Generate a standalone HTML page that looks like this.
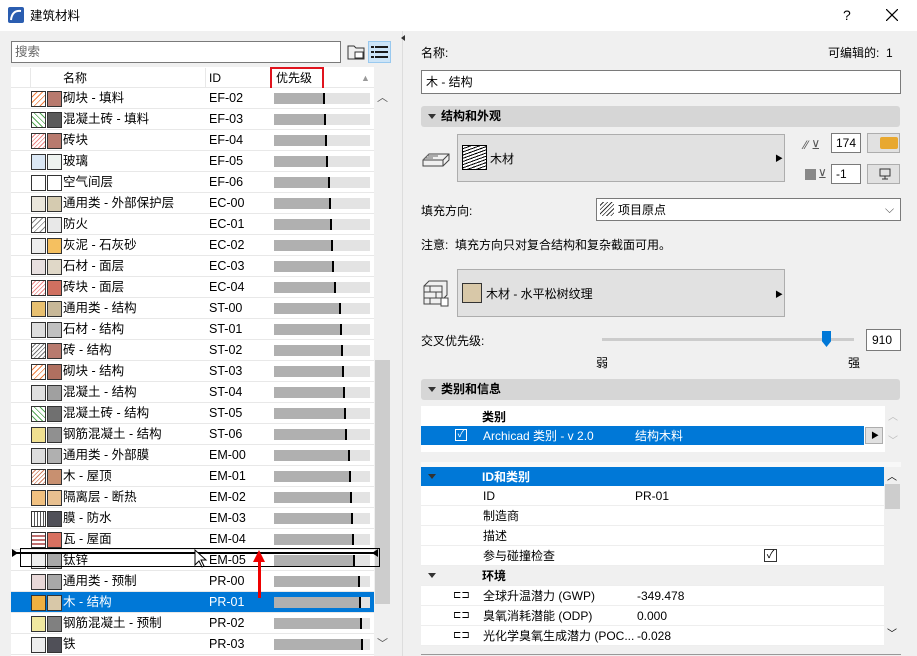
<!DOCTYPE html>
<html><head><meta charset="utf-8"><style>
*{box-sizing:border-box;margin:0;padding:0}
body{width:917px;height:656px;overflow:hidden;background:#f0f0f0;font-family:"Liberation Sans","Noto Sans CJK SC",sans-serif;font-size:12px;line-height:16px;color:#000;position:relative}
.a{position:absolute}
.tb{left:0;top:0;width:917px;height:31px;background:#fff}
.list{left:11px;top:67px;width:363px;height:589px;background:#fff}
.r{position:absolute;left:11px;width:363px;height:21px;border-bottom:1px solid #e8e8e8;background:#fff}
.r .s1,.r .s2{position:absolute;top:3px;width:15px;height:16px;border:1px solid #333}
.r .s1{left:20px;background:#fff}
.r .s2{left:36px}
.r .n{position:absolute;left:52px;top:2px;font-size:12.5px}
.r .i{position:absolute;left:198px;top:2px;font-size:12.5px}
.r .b{position:absolute;left:263px;top:5px;width:96px;height:11px;background:#e3e3e3}
.r .b i{position:absolute;left:0;top:0;height:11px;background:#b0b0b0;border-right:2px solid #000}
.sel{background:#0078d7}
.sel .n,.sel .i{color:#fff}
.hdr{left:421px;width:479px;height:21px;background:#d6d6d6;border-radius:3px;font-weight:bold;padding:2px 0 0 20px}
.hdr:before{content:"";position:absolute;left:7px;top:8px;border:4px solid transparent;border-top:5px solid #333;border-bottom:0}
.btn{background:#e1e1e1;border:1px solid #adadad}
.inp{background:#fff;border:1px solid #7a7a7a}
.pr{position:absolute;left:421px;width:463px;height:20px;background:#fff;border-bottom:1px solid #eee}
.pr span{position:absolute;top:2px}
</style></head><body>
<div class="a tb">
<svg class="a" style="left:8px;top:7px" width="16" height="16"><rect x="0" y="0" width="16" height="16" rx="2" fill="#2a5db0"/><path d="M3 13 Q4 3 13 4" stroke="#fff" stroke-width="2" fill="none"/></svg>
<span class="a" style="left:30px;top:8px;font-size:12.5px">建筑材料</span>
<span class="a" style="left:843px;top:7px;font-size:14px">?</span>
<svg class="a" style="left:886px;top:9px" width="12" height="12"><path d="M0 0L12 12M12 0L0 12" stroke="#000" stroke-width="1.2"/></svg>
</div>
<div class="a inp" style="left:11px;top:41px;width:330px;height:22px;color:#666;padding:2px 3px;font-size:12.5px">搜索</div>
<svg class="a" style="left:347px;top:43px" width="18" height="18"><path d="M1 3h6l2 2h8v11H1z" fill="none" stroke="#333"/><rect x="8" y="9" width="8" height="6" fill="#fff" stroke="#333"/></svg>
<div class="a" style="left:368px;top:41px;width:23px;height:22px;background:#cce4f7;border:1px solid #99c9ef"></div>
<svg class="a" style="left:371px;top:45px" width="17" height="14"><g fill="#1a1a1a"><rect x="0" y="1" width="3" height="2"/><rect x="4" y="1" width="13" height="2"/><rect x="0" y="6" width="3" height="2"/><rect x="4" y="6" width="13" height="2"/><rect x="0" y="11" width="3" height="2"/><rect x="4" y="11" width="13" height="2"/></g></svg>
<div class="a list"></div>
<div class="a" style="left:11px;top:68px;width:363px;height:20px;background:#fff;border-bottom:1px solid #e8e8e8">
<div class="a" style="left:19px;top:0;width:1px;height:20px;background:#e8e8e8"></div>
<span class="a" style="left:52px;top:2px">名称</span>
<div class="a" style="left:194px;top:0;width:1px;height:20px;background:#e8e8e8"></div>
<span class="a" style="left:198px;top:2px">ID</span>
<div class="a" style="left:259px;top:-1px;width:54px;height:24px;border:2px solid #e0141e"></div>
<span class="a" style="left:265px;top:2px">优先级</span>
<span class="a" style="left:350px;top:2px;color:#999;font-size:9px">▲</span>
</div>
<div class="a" style="left:374px;top:88px;width:17px;height:568px;background:#f0f0f0"></div>
<div class="a" style="left:375px;top:360px;width:15px;height:244px;background:#cdcdcd"></div>
<span class="a" style="left:377px;top:90px;font-size:11px;color:#555">︿</span>
<span class="a" style="left:377px;top:636px;font-size:11px;color:#555">﹀</span>

<div class="r" style="top:88px"><div class="s1" style="background:repeating-linear-gradient(135deg,#fff 0 3px,#f08040 3px 4px)"></div><div class="s2" style="background:#b87a6e"></div><span class="n">砌块 - 填料</span><span class="i">EF-02</span><div class="b"><i style="width:51px"></i></div></div>
<div class="r" style="top:109px"><div class="s1" style="background:repeating-linear-gradient(45deg,#fff 0 3px,#5a5 3px 4px)"></div><div class="s2" style="background:#5a5a5a"></div><span class="n">混凝土砖 - 填料</span><span class="i">EF-03</span><div class="b"><i style="width:52px"></i></div></div>
<div class="r" style="top:130px"><div class="s1" style="background:repeating-linear-gradient(135deg,#fff 0 2px,#e88 2px 3px)"></div><div class="s2" style="background:#b87a6e"></div><span class="n">砖块</span><span class="i">EF-04</span><div class="b"><i style="width:53px"></i></div></div>
<div class="r" style="top:151px"><div class="s1" style="background:#dbe8f5"></div><div class="s2" style="background:#eef3f0"></div><span class="n">玻璃</span><span class="i">EF-05</span><div class="b"><i style="width:54px"></i></div></div>
<div class="r" style="top:172px"><div class="s1"></div><div class="s2" style="background:#fff"></div><span class="n">空气间层</span><span class="i">EF-06</span><div class="b"><i style="width:56px"></i></div></div>
<div class="r" style="top:193px"><div class="s1" style="background:#eae6dc"></div><div class="s2" style="background:#d5cbb0"></div><span class="n">通用类 - 外部保护层</span><span class="i">EC-00</span><div class="b"><i style="width:57px"></i></div></div>
<div class="r" style="top:214px"><div class="s1" style="background:repeating-linear-gradient(135deg,#fff 0 3px,#888 3px 4px)"></div><div class="s2" style="background:#e8e8e8"></div><span class="n">防火</span><span class="i">EC-01</span><div class="b"><i style="width:58px"></i></div></div>
<div class="r" style="top:235px"><div class="s1" style="background:#eee"></div><div class="s2" style="background:#f5c060"></div><span class="n">灰泥 - 石灰砂</span><span class="i">EC-02</span><div class="b"><i style="width:59px"></i></div></div>
<div class="r" style="top:256px"><div class="s1" style="background:#e8e0e0"></div><div class="s2" style="background:#e0d8c8"></div><span class="n">石材 - 面层</span><span class="i">EC-03</span><div class="b"><i style="width:60px"></i></div></div>
<div class="r" style="top:277px"><div class="s1" style="background:repeating-linear-gradient(135deg,#fff 0 2px,#e88 2px 3px)"></div><div class="s2" style="background:#d07060"></div><span class="n">砖块 - 面层</span><span class="i">EC-04</span><div class="b"><i style="width:62px"></i></div></div>
<div class="r" style="top:298px"><div class="s1" style="background:#e8c070"></div><div class="s2" style="background:#c8b898"></div><span class="n">通用类 - 结构</span><span class="i">ST-00</span><div class="b"><i style="width:67px"></i></div></div>
<div class="r" style="top:319px"><div class="s1" style="background:#ddd"></div><div class="s2" style="background:#c0c0c0"></div><span class="n">石材 - 结构</span><span class="i">ST-01</span><div class="b"><i style="width:68px"></i></div></div>
<div class="r" style="top:340px"><div class="s1" style="background:repeating-linear-gradient(135deg,#fff 0 2px,#777 2px 3px)"></div><div class="s2" style="background:#b87a6e"></div><span class="n">砖 - 结构</span><span class="i">ST-02</span><div class="b"><i style="width:69px"></i></div></div>
<div class="r" style="top:361px"><div class="s1" style="background:repeating-linear-gradient(135deg,#fff 0 3px,#f08040 3px 4px)"></div><div class="s2" style="background:#b07060"></div><span class="n">砌块 - 结构</span><span class="i">ST-03</span><div class="b"><i style="width:70px"></i></div></div>
<div class="r" style="top:382px"><div class="s1" style="background:#e0e0e0"></div><div class="s2" style="background:#a0a0a0"></div><span class="n">混凝土 - 结构</span><span class="i">ST-04</span><div class="b"><i style="width:71px"></i></div></div>
<div class="r" style="top:403px"><div class="s1" style="background:repeating-linear-gradient(45deg,#fff 0 3px,#5a5 3px 4px)"></div><div class="s2" style="background:#707070"></div><span class="n">混凝土砖 - 结构</span><span class="i">ST-05</span><div class="b"><i style="width:72px"></i></div></div>
<div class="r" style="top:424px"><div class="s1" style="background:#f0e090"></div><div class="s2" style="background:#909090"></div><span class="n">钢筋混凝土 - 结构</span><span class="i">ST-06</span><div class="b"><i style="width:73px"></i></div></div>
<div class="r" style="top:445px"><div class="s1" style="background:#ddd"></div><div class="s2" style="background:#b0b0b0"></div><span class="n">通用类 - 外部膜</span><span class="i">EM-00</span><div class="b"><i style="width:76px"></i></div></div>
<div class="r" style="top:466px"><div class="s1" style="background:repeating-linear-gradient(135deg,#fff 0 2px,#d08060 2px 3px)"></div><div class="s2" style="background:#c89070"></div><span class="n">木 - 屋顶</span><span class="i">EM-01</span><div class="b"><i style="width:77px"></i></div></div>
<div class="r" style="top:487px"><div class="s1" style="background:#f0c080"></div><div class="s2" style="background:#e8c090"></div><span class="n">隔离层 - 断热</span><span class="i">EM-02</span><div class="b"><i style="width:78px"></i></div></div>
<div class="r" style="top:508px"><div class="s1" style="background:repeating-linear-gradient(90deg,#fff 0 2px,#555 2px 3px)"></div><div class="s2" style="background:#505058"></div><span class="n">膜 - 防水</span><span class="i">EM-03</span><div class="b"><i style="width:79px"></i></div></div>
<div class="r" style="top:529px"><div class="s1" style="background:repeating-linear-gradient(0deg,#fff 0 2px,#c07070 2px 4px)"></div><div class="s2" style="background:#d87060"></div><span class="n">瓦 - 屋面</span><span class="i">EM-04</span><div class="b"><i style="width:80px"></i></div></div>
<div class="r" style="top:550px"><div class="s1" style="background:#eee"></div><div class="s2" style="background:#a8a8a8"></div><span class="n">钛锌</span><span class="i">EM-05</span><div class="b"><i style="width:81px"></i></div></div>
<div class="r" style="top:571px"><div class="s1" style="background:#e8d8d8"></div><div class="s2" style="background:#a8a8a8"></div><span class="n">通用类 - 预制</span><span class="i">PR-00</span><div class="b"><i style="width:86px"></i></div></div>
<div class="r sel" style="top:592px"><div class="s1" style="background:#f0b040"></div><div class="s2" style="background:#d8c8a8"></div><span class="n">木 - 结构</span><span class="i">PR-01</span><div class="b"><i style="width:87px"></i></div></div>
<div class="r" style="top:613px"><div class="s1" style="background:#f0e8a0"></div><div class="s2" style="background:#808080"></div><span class="n">钢筋混凝土 - 预制</span><span class="i">PR-02</span><div class="b"><i style="width:88px"></i></div></div>
<div class="r" style="top:634px"><div class="s1" style="background:#eee"></div><div class="s2" style="background:#505058"></div><span class="n">铁</span><span class="i">PR-03</span><div class="b"><i style="width:89px"></i></div></div>

<div class="a" style="left:20px;top:548px;width:360px;height:19px;border:1px solid #000"></div>
<div class="a" style="left:14px;top:552px;width:360px;height:2px;background:#000"></div>
<div class="a" style="left:12px;top:549px;border:4px solid transparent;border-left:6px solid #000"></div>
<div class="a" style="left:368px;top:549px;border:4px solid transparent;border-right:6px solid #000"></div>
<div class="a" style="left:258px;top:560px;width:3px;height:38px;background:#e00"></div>
<div class="a" style="left:253px;top:550px;border:6px solid transparent;border-bottom:12px solid #e00;border-top:0"></div>
<svg class="a" style="left:194px;top:549px" width="16" height="22"><path d="M1 1v15l4-4 3 6 2-1-3-6h5z" fill="#fff" stroke="#000"/></svg>

<div class="a" style="left:395px;top:31px;width:8px;height:625px;background:#f0f0f0;border-right:1px solid #ddd"></div>
<div class="a" style="left:401px;top:35px;border:3px solid transparent;border-right:4px solid #333;border-left:0"></div>

<span class="a" style="left:421px;top:45px">名称:</span>
<span class="a" style="left:828px;top:45px">可编辑的:&nbsp; 1</span>
<div class="a inp" style="left:421px;top:70px;width:480px;height:24px;padding:3px 4px">木 - 结构</div>
<div class="a hdr" style="top:106px">结构和外观</div>
<svg class="a" style="left:421px;top:145px" width="30" height="28"><path d="M2 15l6-6h20v6l-6 6H2z M2 15h20v6 M22 15l6-6" fill="none" stroke="#444"/><path d="M8 9l-6 6 M4 13h8 M7 11h10" stroke="#666"/></svg>
<div class="a btn" style="left:457px;top:134px;width:328px;height:48px"></div>
<div class="a" style="left:462px;top:145px;width:25px;height:25px;border:1px solid #000;background:repeating-linear-gradient(160deg,#fff 0 2px,#000 2px 3px)"></div>
<span class="a" style="left:490px;top:151px">木材</span>
<span class="a" style="left:775px;top:151px;font-size:8px">▶</span>
<span class="a" style="left:804px;top:137px;color:#555">⁄⁄ ⊻</span>
<div class="a inp" style="left:831px;top:133px;width:30px;height:20px;padding:1px 4px">174</div>
<div class="a btn" style="left:867px;top:133px;width:33px;height:20px"><div class="a" style="left:12px;top:3px;width:18px;height:12px;background:#e8a830;border-radius:2px"></div></div>
<div class="a" style="left:805px;top:169px;width:11px;height:11px;background:#888"></div>
<span class="a" style="left:818px;top:166px;color:#555">⊻</span>
<div class="a inp" style="left:831px;top:164px;width:30px;height:20px;padding:1px 4px">-1</div>
<div class="a btn" style="left:867px;top:164px;width:33px;height:20px"><svg class="a" style="left:11px;top:3px" width="12" height="12"><rect x="1" y="1" width="10" height="7" fill="none" stroke="#333"/><path d="M6 8v3M3 11h6" stroke="#333"/></svg></div>
<span class="a" style="left:421px;top:203px">填充方向:</span>
<div class="a inp" style="left:596px;top:198px;width:305px;height:23px"><div class="a" style="left:3px;top:3px;width:14px;height:14px;background:repeating-linear-gradient(135deg,#fff 0 2px,#333 2px 3px)"></div><span class="a" style="left:21px;top:3px">项目原点</span><span class="a" style="left:288px;top:2px;color:#555">⌵</span></div>
<span class="a" style="left:421px;top:237px">注意:&nbsp;&nbsp;填充方向只对复合结构和复杂截面可用。</span>
<svg class="a" style="left:421px;top:278px" width="30" height="30"><path d="M3 8h18v18H3z M3 14h18 M3 20h18 M9 8v6 M15 14v6 M9 20v6 M3 8l5-5h18v14l-5 5" fill="none" stroke="#444"/><rect x="20" y="20" width="7" height="8" fill="#fff" stroke="#444"/></svg>
<div class="a btn" style="left:457px;top:269px;width:328px;height:48px"></div>
<div class="a" style="left:462px;top:283px;width:20px;height:20px;border:1px solid #333;background:#d8c8a8"></div>
<span class="a" style="left:486px;top:286px">木材 - 水平松树纹理</span>
<span class="a" style="left:775px;top:287px;font-size:8px">▶</span>
<span class="a" style="left:421px;top:333px">交叉优先级:</span>
<div class="a" style="left:602px;top:338px;width:252px;height:3px;background:#ccc"></div>
<div class="a" style="left:822px;top:331px;width:9px;height:16px;background:#0078d7;clip-path:polygon(0 0,100% 0,100% 65%,50% 100%,0 65%)"></div>
<div class="a inp" style="left:866px;top:329px;width:35px;height:22px;padding:2px 5px">910</div>
<span class="a" style="left:596px;top:355px">弱</span>
<span class="a" style="left:848px;top:355px">强</span>
<div class="a hdr" style="top:379px">类别和信息</div>
<div class="a" style="left:421px;top:406px;width:464px;height:46px;background:#fff"></div>
<span class="a" style="left:482px;top:409px;font-weight:bold">类别</span>
<div class="a" style="left:421px;top:426px;width:443px;height:19px;background:#0078d7"></div>
<div class="a" style="left:455px;top:429px;width:12px;height:12px;border:1px solid #fff;color:#fff;font-size:10px;line-height:10px;text-align:center">✓</div>
<span class="a" style="left:483px;top:428px;color:#fff">Archicad 类别 - v 2.0</span>
<span class="a" style="left:635px;top:428px;color:#fff">结构木料</span>
<div class="a btn" style="left:865px;top:427px;width:18px;height:17px"><span class="a" style="left:5px;top:0px;font-size:8px">▶</span></div>
<span class="a" style="left:888px;top:410px;color:#bbb;font-size:10px">︿</span>
<span class="a" style="left:888px;top:434px;color:#bbb;font-size:10px">﹀</span>
<div class="a" style="left:421px;top:462px;width:480px;height:5px;background:#f8f8f8"></div>
<div class="a" style="left:421px;top:467px;width:463px;height:19px;background:#0078d7"></div>
<div class="a" style="left:428px;top:474px;border:4px solid transparent;border-top:5px solid #333;border-bottom:0"></div>
<span class="a" style="left:482px;top:469px;color:#fff;font-weight:bold">ID和类别</span>
<div class="pr" style="top:486px"><span style="left:62px">ID</span><span style="left:214px">PR-01</span></div>
<div class="pr" style="top:506px"><span style="left:62px">制造商</span></div>
<div class="pr" style="top:526px"><span style="left:62px">描述</span></div>
<div class="pr" style="top:546px"><span style="left:62px">参与碰撞检查</span><div class="a" style="left:343px;top:3px;width:13px;height:13px;border:1px solid #333;font-size:11px;line-height:11px;text-align:center">✓</div></div>
<div class="pr" style="top:566px;background:#f0f0f0"><div class="a" style="left:7px;top:7px;border:4px solid transparent;border-top:5px solid #333;border-bottom:0"></div><span style="left:61px;font-weight:bold">环境</span></div>
<div class="pr" style="top:586px"><span style="left:32px;font-size:10px">⊏⊐</span><span style="left:62px">全球升温潜力 (GWP)</span><span style="left:216px">-349.478</span></div>
<div class="pr" style="top:606px"><span style="left:32px;font-size:10px">⊏⊐</span><span style="left:62px">臭氧消耗潜能 (ODP)</span><span style="left:216px">0.000</span></div>
<div class="pr" style="top:626px"><span style="left:32px;font-size:10px">⊏⊐</span><span style="left:62px">光化学臭氧生成潜力 (POC...</span><span style="left:216px">-0.028</span></div>
<div class="a" style="left:884px;top:467px;width:17px;height:179px;background:#f0f0f0"></div>
<div class="a" style="left:885px;top:484px;width:15px;height:25px;background:#cdcdcd"></div>
<span class="a" style="left:887px;top:470px;font-size:10px">︿</span>
<span class="a" style="left:887px;top:627px;font-size:10px">﹀</span>
<div class="a" style="left:421px;top:654px;width:480px;height:1px;background:#999"></div>
</body></html>
